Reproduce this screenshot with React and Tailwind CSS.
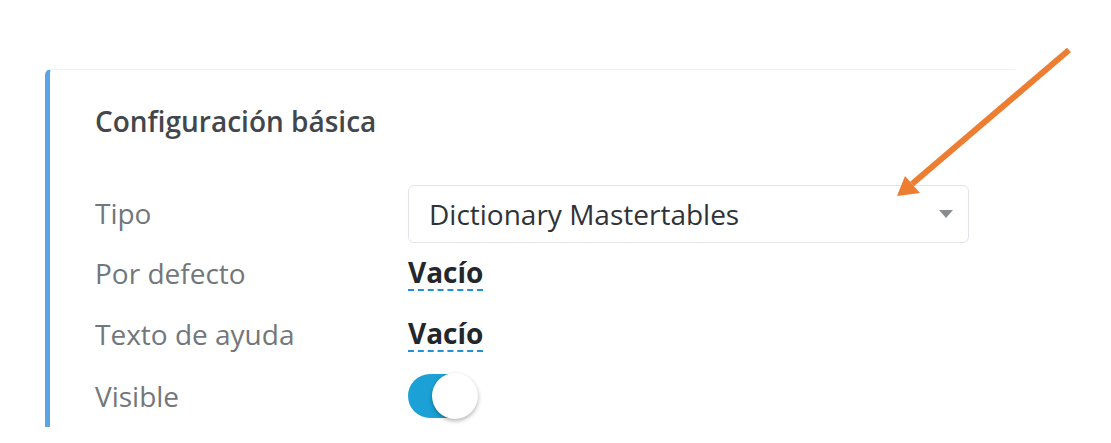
import React from "react";

const Fila = ({ etiqueta, alto, children }) => (
  <div className={`grid grid-cols-[313px_1fr] items-center ${alto}`}>
    <span className="text-[28px] leading-[36px] text-[#72777c]">{etiqueta}</span>
    <div className="flex h-full items-center">{children}</div>
  </div>
);

const Vacio = () => (
  <span className="border-b-2 border-dashed border-[#2291d8] text-[28px] font-bold leading-[34px] text-[#23272b]">
    Vacío
  </span>
);

const App = () => {
  return (
    <div className="relative h-[443px] w-[1111px] overflow-hidden bg-white font-['Open_Sans',sans-serif]">
      <div className="pl-[45px] pt-[69px]">
        <div className="w-[970px] rounded-tl-md border-l-[5px] border-t border-l-[#5ba5e6] border-t-[#eff1f3] pl-[45px] pt-[33px]">
          <h2 className="text-[28px] font-semibold leading-[36px] text-[#43474c]">
            Configuración básica
          </h2>

          <div className="mt-[44px] flex w-[874px] flex-col">
            <Fila etiqueta="Tipo" alto="h-[60px]">
              <div className="mt-auto flex h-[58px] w-[561px] items-center justify-between rounded-md border border-[#e1e4e8] pl-[20px] pr-[14px]">
                <span className="text-[28px] text-[#2f3337]">Dictionary Mastertables</span>
                <svg width="16" height="10" viewBox="0 0 16 10">
                  <path d="M1 1h14L8 9z" fill="#8a8d90" />
                </svg>
              </div>
            </Fila>
            <Fila etiqueta="Por defecto" alto="h-[59px]">
              <Vacio />
            </Fila>
            <Fila etiqueta="Texto de ayuda" alto="h-[63px]">
              <Vacio />
            </Fila>
            <Fila etiqueta="Visible" alto="h-[62px]">
              <div className="relative h-[46px] w-[70px]">
                <div className="absolute left-0 top-[1px] h-[44px] w-[62px] rounded-full bg-[#1ba1d5]" />
                <div className="absolute right-0 top-0 h-[46px] w-[46px] rounded-full bg-white shadow-[0_2px_4px_rgba(0,0,0,0.3)]" />
              </div>
            </Fila>
          </div>
        </div>
      </div>

      {/* flecha de anotación */}
      <svg className="absolute left-0 top-0" width="1111" height="443" viewBox="0 0 1111 443">
        <line x1="1069" y1="50" x2="912" y2="184" stroke="#ed7d31" strokeWidth="6" />
        <path d="M897 196 L905 176 L920 193 Z" fill="#ed7d31" />
      </svg>
    </div>
  );
};

export default App;
